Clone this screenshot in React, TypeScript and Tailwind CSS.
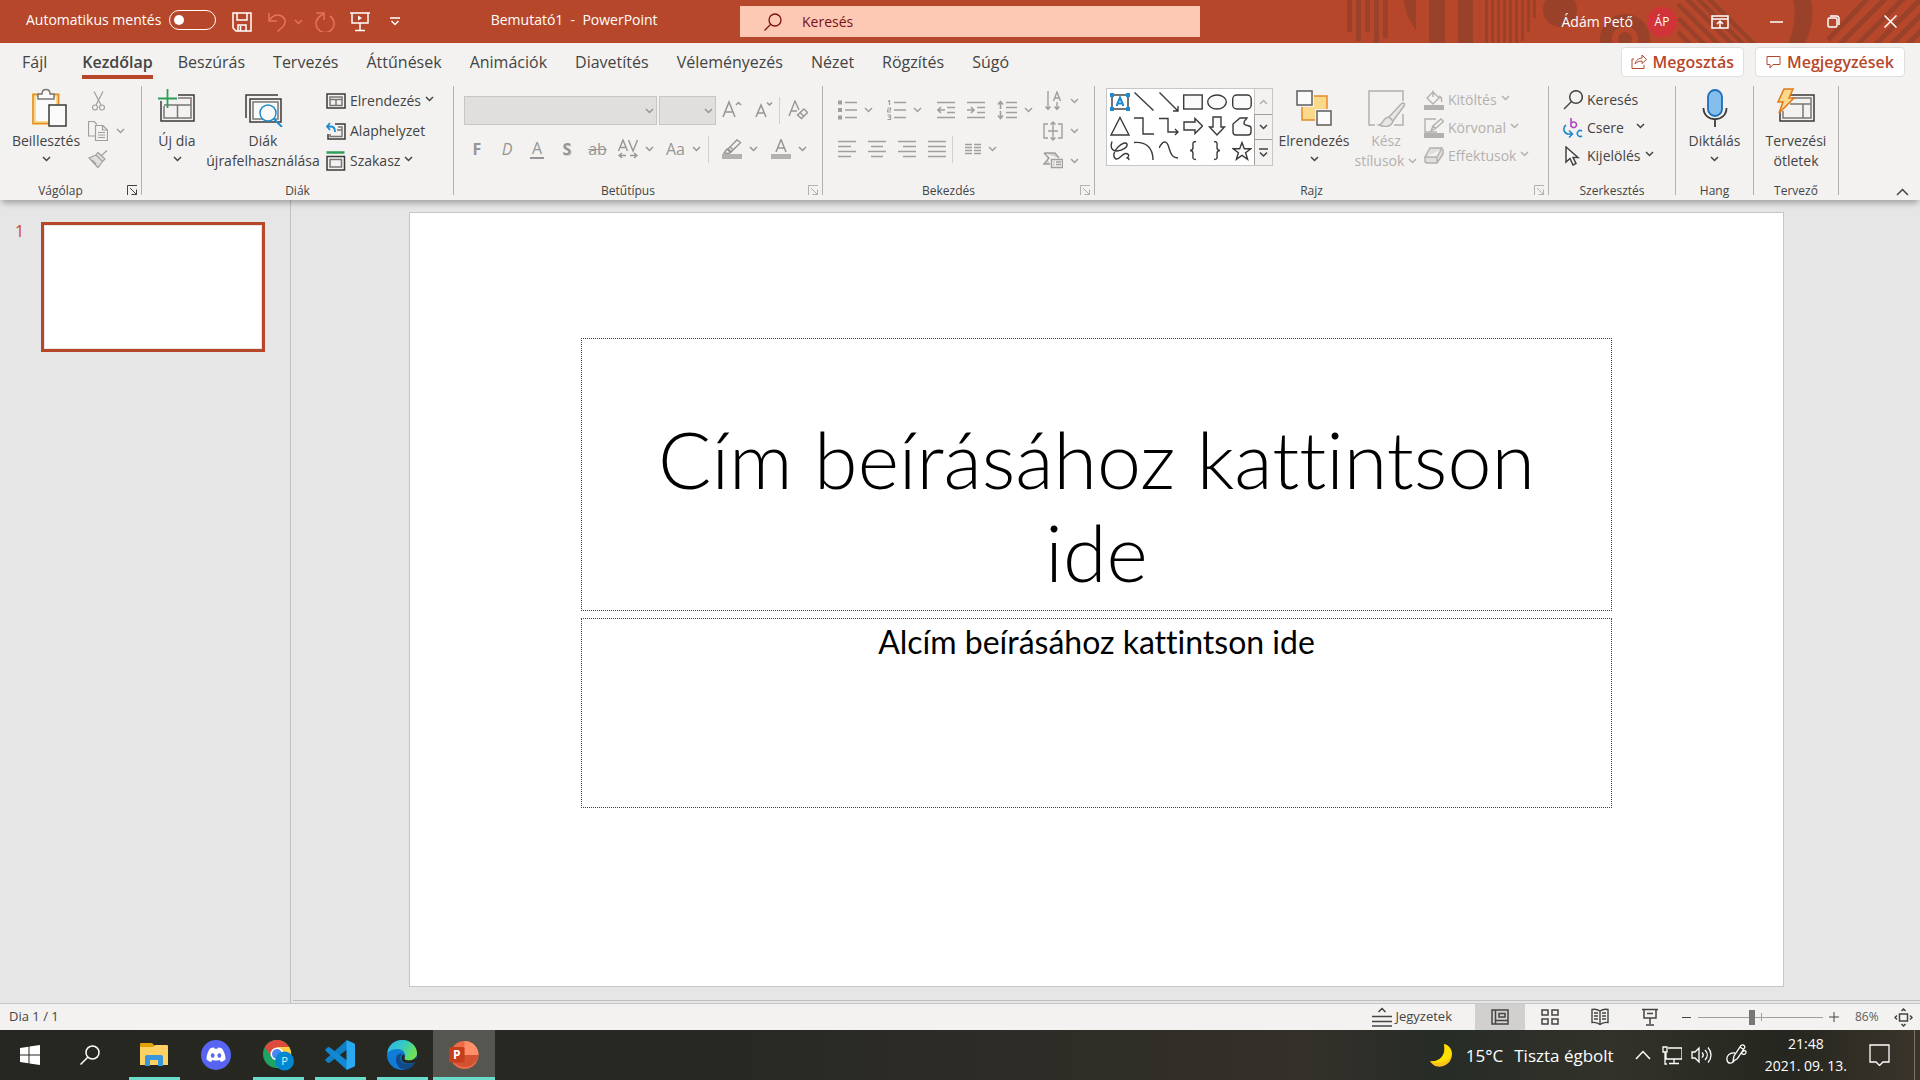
import type { ReactNode } from "react";

type IconProps = { w?: number; h?: number; sw?: number; className?: string; children: ReactNode };

function Icon({ w = 20, h = 20, sw = 1, className = "", children }: IconProps) {
  return (
    <svg
      width={w}
      height={h}
      viewBox={`0 0 ${w} ${h}`}
      fill="none"
      stroke="currentColor"
      strokeWidth={sw}
      className={`shrink-0 ${className}`}
      aria-hidden="true"
    >
      {children}
    </svg>
  );
}

function Chevron({ className = "", up = false }: { className?: string; up?: boolean }) {
  return (
    <Icon w={9} h={6} sw={1.5} className={className}>
      <path d={up ? "M1 5 4.500 1.500 8 5" : "M1 1 4.500 4.500 8 1"} />
    </Icon>
  );
}

/* ---------- title bar ---------- */

function TitleArt() {
  const thin = [43, 43, 43, 43, 43, 43, 41, 32, 18];
  return (
    <svg
      className="absolute right-0 top-0 text-[#9a412a]"
      width="580"
      height="43"
      viewBox="0 0 580 43"
      fill="currentColor"
      aria-hidden="true"
    >
      <path d="M7 0h5v32H7zM16 0h5v41h-5zM25 0h5v32h-5zM34 0h5v43h-5zM43 0h5v38h-5z" />
      <path d="M64 0h12v30C70 22 65 12 64 0zM89 0h16v43H89zM118 0h15v43h-15z" />
      {thin.map((len, i) => (
        <rect key={i} x={145 + i * 6} y="0" width="3" height={len} />
      ))}
      <circle cx="220" cy="10" r="17" />
      <circle cx="285" cy="39" r="19" fill="none" stroke="currentColor" strokeWidth="12" />
      <circle cx="285" cy="39" r="7" />
      <g stroke="currentColor" strokeWidth="4.500">
        <path d="M338 32l14 14M338 18l28 28M338 4l42 42M344-4l50 50M355-4l50 50M366-4l50 50" />
      </g>
      <path d="M453 0h18c3 15 1 29-6 43h-17c7-14 8-29 5-43z" />
      <g stroke="currentColor" strokeWidth="5">
        <path d="M488 40L530-4M500 44L548-4M518 44L566-4M536 44L582-2M552 44L582 14M568 44L582 30" />
      </g>
    </svg>
  );
}

function TitleBar() {
  return (
    <header className="relative grid h-[43px] grid-cols-[740px_460px_1fr] bg-[#b7472a] text-sm text-white">
      <TitleArt />
      <div className="flex items-center pb-1">
        <label className="ml-[26px] flex items-center gap-2">
          Automatikus mentés
          <input type="checkbox" role="switch" className="peer sr-only" />
          <span className="flex h-5 w-[47px] items-center rounded-full border border-white px-1">
            <span className="size-[10px] rounded-full bg-white" />
          </span>
        </label>
        <div className="flex items-center pt-1">
          <button className="ml-4" aria-label="Mentés">
            <Icon sw={1.5}>
              <path d="M1 1h18v18H4l-3-3zM5 1v7h10V1M6 19v-6h8v6M8.500 14v5" />
            </Icon>
          </button>
          <button className="ml-[15px] flex items-center gap-[7px] text-[#e4735a]" aria-label="Visszavonás">
            <Icon sw={1.5}>
              <path d="M2 1v8h8M2.500 8.500C5 3.500 10 1.500 14.500 4c5 3 4.500 8 1 11l-5 4.500" />
            </Icon>
            <Chevron />
          </button>
          <button className="ml-3 text-[#e4735a]" aria-label="Ismétlés">
            <Icon w={21} sw={1.500}>
              <path d="M1 1h8v7M15 4a9 9 0 1 1-9-.500L9 1.500" />
            </Icon>
          </button>
          <button className="ml-[14px]" aria-label="Vetítés az elejétől">
            <Icon sw={1.500}>
              <path d="M0 1h20M2 1v10h16V1M10 11v7M5 18.500h10" />
              <path d="M8 3.500v5l4-2.500z" fill="currentColor" stroke="none" />
            </Icon>
          </button>
          <button className="ml-5" aria-label="Gyorselérési eszköztár testreszabása">
            <Icon w={10} h={10} sw={1.500}>
              <path d="M0 1h10M1.500 4 5 7.500 8.500 4" />
            </Icon>
          </button>
        </div>
        <h1 className="flex-1 whitespace-pre pl-2 text-center">Bemutató1  -  PowerPoint</h1>
      </div>
      <label className="my-[6px] flex items-center gap-5 bg-[#fdc8b4] pl-6 text-[#7a1117]">
        <Icon w={18} h={18} sw={1.300}>
          <circle cx="11" cy="7" r="6" />
          <path d="M6.500 11.500 0.500 17.500" />
        </Icon>
        <input
          type="search"
          aria-label="Keresés"
          placeholder="Keresés"
          className="w-full bg-transparent outline-none placeholder:text-[#7a1117]"
        />
      </label>
      <div className="relative flex items-center justify-end pr-px">
        <span className="mr-[14px]">Ádám Pető</span>
        <button className="mr-[14px] flex size-[30px] items-center justify-center rounded-full bg-[#d13438] text-xs">
          ÁP
        </button>
        <button className="flex w-[57px] justify-center" aria-label="Menüszalag megjelenítési beállításai">
          <Icon w={18} h={14} sw={1.500}>
            <path d="M1 1h16v12H1zM1 4h16M9 13V6M6 9l3-3 3 3" />
          </Icon>
        </button>
        <button className="flex w-[57px] justify-center" aria-label="Kis méret">
          <Icon w={13} h={2} sw={1.500}>
            <path d="M0 1h13" />
          </Icon>
        </button>
        <button className="flex w-[57px] justify-center" aria-label="Előző méret">
          <Icon w={13} h={13} sw={1.500}>
            <rect x="1" y="3" width="9" height="9" rx="1.500" />
            <path d="M3 1h6.500a2.500 2.500 0 0 1 2.500 2.500V10" />
          </Icon>
        </button>
        <button className="flex w-[57px] justify-center" aria-label="Bezárás">
          <Icon w={13} h={13} sw={1.500}>
            <path d="M0.500 0.500l12 12M12.500 0.500l-12 12" />
          </Icon>
        </button>
      </div>
    </header>
  );
}

/* ---------- tabs ---------- */

const tabs = [
  "Beszúrás",
  "Tervezés",
  "Áttűnések",
  "Animációk",
  "Diavetítés",
  "Véleményezés",
  "Nézet",
  "Rögzítés",
  "Súgó",
];

function TabRow() {
  return (
    <nav className="flex h-[43px] items-start bg-[#f3f2f1] text-base text-[#444]">
      <button className="ml-[22px] mr-[35px] h-[38px]">Fájl</button>
      <button className="mr-[-3px] h-9 border-b-4 border-[#b7472a] pt-[6px] font-semibold">Kezdőlap</button>
      {tabs.map((t) => (
        <button key={t} className="ml-7 h-[38px]">
          {t}
        </button>
      ))}
      <div className="ml-auto mr-[15px] mt-1 flex gap-[11px] font-semibold text-[#b7472a]">
        <button className="flex h-[30px] items-center gap-[6px] rounded-sm border border-[#e1dfdd] bg-white px-[9px]">
          <Icon w={16} h={16}>
            <path d="M1 5v9.500h12V11M1 5h2M4 10c1-4 4-6 7-6V1l4.500 4.500L11 9.500V7C8 7 6 8 4 10z" />
          </Icon>
          Megosztás
        </button>
        <button className="flex h-[30px] items-center gap-[6px] rounded-sm border border-[#e1dfdd] bg-white px-[10px]">
          <Icon w={15} h={15}>
            <path d="M1 1.500h13v8H7l-3 3.500V9.500H1z" />
          </Icon>
          Megjegyzések
        </button>
      </div>
    </nav>
  );
}

/* ---------- ribbon ---------- */

function Group({
  label,
  width,
  launcher = "none",
  children,
}: {
  label: string;
  width: string;
  launcher?: "none" | "on" | "off";
  children: ReactNode;
}) {
  return (
    <section className={`relative flex h-[109px] shrink-0 flex-col border-r border-[#b3b0ad] ${width}`}>
      <div className="flex flex-1 items-start">{children}</div>
      <h2 className={`text-center text-xs leading-[9px] ${launcher === "none" ? "" : "pr-5"}`}>{label}</h2>
      {launcher !== "none" && (
        <button
          aria-label={`${label} párbeszédpanel`}
          className={`absolute bottom-0 right-1 ${launcher === "on" ? "text-[#444]" : "text-[#b3b0ad]"}`}
        >
          <Icon w={10} h={10}>
            <path d="M0.500 10V0.500H10M3 3l6.500 6.500M9.500 4.500v5h-5" />
          </Icon>
        </button>
      )}
    </section>
  );
}

function Big({
  icon,
  line1,
  line2,
  chevron = false,
  disabled = false,
  width,
}: {
  icon: ReactNode;
  line1: string;
  line2?: string;
  chevron?: boolean;
  disabled?: boolean;
  width: string;
}) {
  return (
    <button
      disabled={disabled}
      className={`flex shrink-0 flex-col items-center whitespace-nowrap pt-[2px] leading-5 ${width} ${disabled ? "text-[#b3b0ad]" : ""}`}
    >
      {icon}
      <span className="mt-1">{line1}</span>
      <span className="flex h-5 items-center gap-1">
        {line2}
        {chevron && <Chevron className={line2 ? "" : "mb-1"} />}
      </span>
    </button>
  );
}

function Row({
  icon,
  label,
  chevron = false,
  disabled = false,
  tall = false,
  gap = "gap-1",
}: {
  icon: ReactNode;
  label: string;
  chevron?: boolean;
  disabled?: boolean;
  tall?: boolean;
  gap?: string;
}) {
  return (
    <button
      disabled={disabled}
      className={`flex items-center gap-1 whitespace-nowrap ${tall ? "h-[30px]" : "h-[28px]"} ${disabled ? "text-[#b3b0ad]" : ""}`}
    >
      <span className="flex w-5 justify-center">{icon}</span>
      <span className={`flex items-center ${gap}`}>
        {label}
        {chevron && <Chevron className="mb-1" />}
      </span>
    </button>
  );
}

function Tool({ label, width, children }: { label: string; width: string; children: ReactNode }) {
  return (
    <button
      aria-label={label}
      title={label}
      disabled
      className={`flex h-[30px] shrink-0 items-center justify-center gap-[7px] ${width}`}
    >
      {children}
    </button>
  );
}

const Sep = () => <span className="h-[27px] w-px shrink-0 bg-[#d2d0ce]" />;

function ClipboardGroup() {
  return (
    <Group label="Vágólap" width="w-[142px]" launcher="on">
      <Big
        width="ml-[11px] w-[70px]"
        line1="Beillesztés"
        chevron
        icon={
          <Icon w={36} h={39} sw={1.500} className="ml-2">
            <path d="M2 7h24v28H2z" fill="#fafafa" stroke="#fbd98b" strokeWidth="4" />
            <path d="M26.500 16V6.500H1V35.500h15" stroke="#e58a2b" />
            <path d="M6 11V6h4c0-6 8-6 8 0h4v5z" fill="#fafafa" stroke="#797775" />
            <rect x="17" y="17" width="17" height="21" fill="#fafafa" stroke="#3b3a39" />
          </Icon>
        }
      />
      <div className="ml-[7px] flex flex-col text-[#a19f9d]">
        <button aria-label="Kivágás" disabled className="flex h-[30px] items-center pl-1">
          <Icon w={13} h={20} sw={1.200}>
            <path d="M2 0.500 9 14M11 0.500 4 14" />
            <circle cx="3" cy="16.500" r="2.500" />
            <circle cx="10" cy="16.500" r="2.500" />
          </Icon>
        </button>
        <button aria-label="Másolás" disabled className="flex h-[30px] items-center gap-2">
          <Icon sw={1.200}>
            <path d="M7 15H0.500V0.500H6l3 3" />
            <path d="M7.500 4.500H15l4.500 4.500v10.500h-12zM14.500 4.500V9h5M10 11.500h7M10 14h7M10 16.500h7" />
          </Icon>
          <Chevron />
        </button>
        <button aria-label="Formátummásoló" disabled className="flex h-[26px] items-center">
          <Icon sw={1.200}>
            <path d="M19 1.500 13 7M10 3.500l7 6.500-2.500 2.500L8 6zM8 6 1 9l9 9.500 4.500-6" fill="#e1dfdd" />
            <path d="M4 11l4 4" />
          </Icon>
        </button>
      </div>
    </Group>
  );
}

function SlidesGroup() {
  return (
    <Group label="Diák" width="w-[312px]">
      <Big
        width="w-[70px]"
        line1="Új dia"
        chevron
        icon={
          <Icon w={40} h={39} sw={1.500}>
            <path d="M4 13v20h33V7H21" stroke="#3b3a39" />
            <path d="M7 18v12h27V10H21M7 17h27M20.500 17v13" stroke="#797775" />
            <path d="M1 10.500h19M10.500 1v19" stroke="#2f9e58" strokeWidth="1.800" />
          </Icon>
        }
      />
      <Big
        width="ml-[-5px] w-[112px]"
        line1="Diák"
        line2="újrafelhasználása"
        icon={
          <Icon w={40} h={39} sw={1.500}>
            <path d="M3 30V7h32" stroke="#3b3a39" />
            <path d="M7 34V11h31v23z" stroke="#3b3a39" />
            <path d="M10 31V14h25v17z" fill="#fafafa" stroke="#797775" />
            <circle cx="25" cy="25" r="8" fill="#fafafa" stroke="#1e8bcd" />
            <path d="M31 31l8 8" stroke="#1e8bcd" strokeWidth="2" />
          </Icon>
        }
      />
      <div className="ml-[7px] flex flex-col">
        <Row
          tall
          label="Elrendezés"
          chevron
          icon={
            <Icon h={16} sw={1.500}>
              <path d="M1 1h18v14H1z" stroke="#3b3a39" />
              <path d="M4 4h12v8.500H4zM4 6.500h12M10 6.500v6" stroke="#797775" />
            </Icon>
          }
        />
        <Row
          tall
          label="Alaphelyzet"
          icon={
            <Icon h={18} sw={1.500}>
              <path d="M2 12v5h17V2H9" stroke="#3b3a39" />
              <path d="M4 12v2.500h12V5h-4M11 8h5" stroke="#797775" />
              <path d="M4 1 1 4.500 4 8M1 4.500h4c3 0 4 2 4 5.500" stroke="#1e8bcd" strokeWidth="1.800" />
            </Icon>
          }
        />
        <Row
          tall
          label="Szakasz"
          chevron
          icon={
            <Icon sw={1.500}>
              <path d="M0.500 1.500h18" stroke="#2f9e58" strokeWidth="2.500" />
              <path d="M1 5.500h17.500V19H1z" stroke="#3b3a39" />
              <path d="M4 8.500h11.500V16H4z" stroke="#797775" />
            </Icon>
          }
        />
      </div>
    </Group>
  );
}

function FontGroup() {
  return (
    <Group label="Betűtípus" width="w-[369px]" launcher="off">
      <div className="flex flex-col gap-[9px] pt-[9px] text-[#979593]">
        <div className="flex items-center">
          <label className="relative ml-[10px]">
            <select
              aria-label="Betűtípus"
              disabled
              className="block h-[29px] w-[193px] appearance-none border border-[#c8c6c4] bg-[#e1dfdd]"
            />
            <Chevron className="absolute right-[3px] top-3" />
          </label>
          <label className="relative ml-[2px]">
            <select
              aria-label="Betűméret"
              disabled
              className="block h-[29px] w-[57px] appearance-none border border-[#c8c6c4] bg-[#e1dfdd]"
            />
            <Chevron className="absolute right-[3px] top-3" />
          </label>
          <Tool label="Betűméret növelése" width="w-8">
            <Icon sw={1.500}>
              <path d="M1 17 7 2l6 15M3 12h8M14 5l2.500-2.500L19 5" />
            </Icon>
          </Tool>
          <Tool label="Betűméret csökkentése" width="w-[31px]">
            <Icon sw={1.500}>
              <path d="M2 17 7 5l5 12M4 13h6M13 2.500 15.500 5 18 2.500" />
            </Icon>
          </Tool>
          <Sep />
          <Tool label="Formázás törlése" width="w-9">
            <Icon sw={1.400}>
              <path d="M1 16 7 1l4 9M3 11h6M16 9l3.500 3.500-6 6L9.500 15zM12 12.500l4 4" />
            </Icon>
          </Tool>
        </div>
        <div className="flex items-center">
          <Tool label="Félkövér" width="ml-2 w-[30px]">
            <b className="text-base">F</b>
          </Tool>
          <Tool label="Dőlt" width="w-[30px]">
            <i className="text-base">D</i>
          </Tool>
          <Tool label="Aláhúzott" width="w-[30px]">
            <span className="border-b-2 border-current px-[2px] text-base leading-[18px]">A</span>
          </Tool>
          <Tool label="Árnyék" width="w-[30px]">
            <b className="text-base drop-shadow-[1px_1px_0_#d2d0ce]">S</b>
          </Tool>
          <Tool label="Áthúzott" width="w-[31px]">
            <s className="text-base">ab</s>
          </Tool>
          <Tool label="Betűköz" width="w-[46px]">
            <Icon sw={1.400}>
              <path d="M0.500 12 5 1l4.500 11M2.500 8.500h5M10.500 1 15 12l4.500-11" />
              <path d="M4 14 1 16.500 4 19M1 16.500h7M16 14l3 2.500-3 2.500M19 16.500h-7" />
            </Icon>
            <Chevron />
          </Tool>
          <Tool label="Kis- és nagybetűk" width="w-[49px]">
            <span className="text-base">Aa</span>
            <Chevron />
          </Tool>
          <Sep />
          <Tool label="Szövegkiemelés színe" width="ml-1 w-[54px]">
            <Icon sw={1.400}>
              <path d="M2 14l3-4 3.500 3.500-2 1zM6 10l9-9 3.500 2.500-9 9zM8 8l4 3" />
              <path d="M0 17.500h20" stroke="#b3b0ad" strokeWidth="5" />
            </Icon>
            <Chevron />
          </Tool>
          <Tool label="Betűszín" width="w-[44px]">
            <Icon sw={1.500}>
              <path d="M5 13 10 0.500 15 13M7 9h6" />
              <path d="M0 17.500h20" stroke="#b3b0ad" strokeWidth="5" />
            </Icon>
            <Chevron />
          </Tool>
        </div>
      </div>
    </Group>
  );
}

function AlignIcon({ d }: { d: string }) {
  return (
    <Icon w={18} h={18} sw={1.600}>
      <path d={d} />
    </Icon>
  );
}

function ParagraphGroup() {
  return (
    <Group label="Bekezdés" width="w-[272px]" launcher="off">
      <div className="flex flex-col gap-[9px] pt-[9px] text-[#a19f9d]">
        <div className="flex items-center">
          <Tool label="Felsorolás" width="ml-2 w-[49px]">
            <Icon w={19} sw={1.600}>
              <path d="M7 2.500h12M7 10h12M7 17.500h12" />
              <path d="M2 0.500v4M2 8v4M2 15.500v4" strokeWidth="4" />
            </Icon>
            <Chevron />
          </Tool>
          <Tool label="Számozás" width="w-[49px]">
            <Icon w={19} sw={1.600}>
              <path d="M7 2.500h12M7 10h12M7 17.500h12" />
              <path d="M1 1.500 2.500 0.500V5M0.500 8h3v2h-3v2h3.500M0.500 15h3v4.500h-3M1 17h2" strokeWidth="1.200" />
            </Icon>
            <Chevron />
          </Tool>
          <Tool label="Listaszint csökkentése" width="ml-[2px] w-[30px]">
            <AlignIcon d="M0 1.500h18M10 6.500h8M10 11.500h8M0 16.500h18M8 9H1.500M4 6 1 9l3 3" />
          </Tool>
          <Tool label="Listaszint növelése" width="w-[30px]">
            <AlignIcon d="M0 1.500h18M10 6.500h8M10 11.500h8M0 16.500h18M0 9h6.500M4 6l3 3-3 3" />
          </Tool>
          <Tool label="Sorköz" width="ml-1 w-10">
            <Icon sw={1.600}>
              <path d="M9 2.500h11M9 7.500h11M9 12.500h11M9 17.500h11M3.500 2v7M1 4.500l2.500-3 2.500 3M3.500 11v7M1 15.500l2.500 3 2.500-3" />
            </Icon>
            <Chevron />
          </Tool>
        </div>
        <div className="flex items-center">
          <Tool label="Balra zárt" width="ml-[9px] w-[30px]">
            <AlignIcon d="M0 1.500h18M0 6.500h13M0 11.500h18M0 16.500h13" />
          </Tool>
          <Tool label="Középre zárt" width="w-[30px]">
            <AlignIcon d="M0 1.500h18M3 6.500h12M0 11.500h18M3 16.500h12" />
          </Tool>
          <Tool label="Jobbra zárt" width="w-[30px]">
            <AlignIcon d="M0 1.500h18M5 6.500h13M0 11.500h18M5 16.500h13" />
          </Tool>
          <Tool label="Sorkizárt" width="w-[30px]">
            <AlignIcon d="M0 1.500h18M0 6.500h18M0 11.500h18M0 16.500h18" />
          </Tool>
          <Sep />
          <Tool label="Hasábok" width="ml-[2px] w-[51px]">
            <Icon w={16} h={12} sw={1.400}>
              <path d="M0 1.500h7M0 4.500h7M0 7.500h7M0 10.500h7M9 1.500h7M9 4.500h7M9 7.500h7M9 10.500h7" />
            </Icon>
            <Chevron />
          </Tool>
        </div>
      </div>
      <div className="ml-auto mr-[14px] flex flex-col text-[#a19f9d]">
        <Tool label="Szövegirány" width="w-[38px]">
          <Icon sw={1.400}>
            <path d="M5 0v18M2.500 15.500 5 18.500l2.500-3M14 11v7M11.500 15.500l2.500 3 2.500-3M10.500 10 14 1l3.500 9M12 7h4" />
          </Icon>
          <Chevron />
        </Tool>
        <Tool label="Szöveg igazítása" width="w-[38px]">
          <Icon sw={1.400}>
            <path d="M5 3H1v14h4M15 3h4v14h-4M5 10h10M10 1v18M7.500 3.500 10 1l2.500 2.500M7.500 16.500 10 19l2.500-2.500" />
          </Icon>
          <Chevron />
        </Tool>
        <Tool label="Átalakítás SmartArt-ábrává" width="w-[38px]">
          <Icon sw={1.400}>
            <path d="M1 2h11l4 5M1 2l5 5-5 6h6" fill="#d2d0ce" />
            <path d="M8.500 8.500h11v8h-11z" fill="#f3f2f1" />
            <path d="M10.500 11h1M10.500 13.500h1M13 11h5M13 13.500h5" />
          </Icon>
          <Chevron />
        </Tool>
      </div>
    </Group>
  );
}

const shapes: { name: string; draw: ReactNode }[] = [
  {
    name: "Szövegdoboz",
    draw: (
      <>
        <rect x="2" y="3" width="16" height="14" />
        <path d="M6.500 14 10 5.500 13.500 14M8 11.500h4" stroke="#1e8bcd" strokeWidth="2" />
        <path d="M0 1h4v4H0zM16 1h4v4h-4zM0 15h4v4H0zM16 15h4v4h-4z" fill="#1e8bcd" stroke="none" />
      </>
    ),
  },
  { name: "Vonal", draw: <path d="M0.500 0.500l19 18" /> },
  { name: "Nyíl", draw: <path d="M0.500 0.500l18.500 18.500M19 14v5h-5" /> },
  { name: "Téglalap", draw: <rect x="0.700" y="3" width="18.500" height="14" fill="#fafafa" /> },
  { name: "Ellipszis", draw: <ellipse cx="10" cy="10" rx="9.300" ry="7" fill="#fafafa" /> },
  { name: "Lekerekített téglalap", draw: <rect x="0.700" y="3" width="18.500" height="14" rx="4" fill="#fafafa" /> },
  { name: "Háromszög", draw: <path d="M10 1.500 19 19H1z" fill="#fafafa" /> },
  { name: "Szögletes összekötő", draw: <path d="M0 2h9v16h11" /> },
  { name: "Szögletes nyíl", draw: <path d="M0 2.500h9V16h10M16 13l3 3-3 3" /> },
  { name: "Jobbra nyíl", draw: <path d="M1 6h11V2.500l7.500 7.500L12 17.500V14H1z" fill="#fafafa" /> },
  { name: "Lefelé nyíl", draw: <path d="M6 1v10H2.500l7.500 8 7.500-8H14V1z" fill="#fafafa" /> },
  {
    name: "Szabadkézi sokszög",
    draw: <path d="M4 19h12c2 0 3-1 3-3v-4c0-4-7-1-7-5 0-3 2-3 3-5H8L1 8v8c0 2 1 3 3 3z" fill="#fafafa" />,
  },
  {
    name: "Firka",
    draw: (
      <path d="M2 0.500c-2 6 0 10 5 9.500 6-.500 11-4 10-7-1-2-5-1-9 3-4 4-6 10-2 12 4 1 6-6 10-5.500 4 .500 3 4 .500 4.500 2 0 3 .500 2 2" />
    ),
  },
  { name: "Ív", draw: <path d="M0 1.500c12-1 19 5 19 17.500" /> },
  { name: "Görbe", draw: <path d="M0 7c4-8 8-8 10 0 2 7 4 10 9 10" /> },
  { name: "Bal kapcsos zárójel", draw: <path d="M13 0.500c-4 0-3 3-3 6 0 2-1 3-3 3 2 0 3 1 3 3 0 4-1 6 3 6" /> },
  { name: "Jobb kapcsos zárójel", draw: <path d="M7 0.500c4 0 3 3 3 6 0 2 1 3 3 3-2 0-3 1-3 3 0 4 1 6-3 6" /> },
  {
    name: "Csillag",
    draw: <path d="M10 1.500l2.300 6.200h6.500l-5.200 4.100 2 6.500L10 14.400l-5.600 3.900 2-6.500L1.200 7.700h6.500z" fill="#fafafa" />,
  },
];

function DrawingGroup() {
  return (
    <Group label="Rajz" width="w-[454px]" launcher="off">
      <div className="ml-[11px] mt-[2px] flex h-[78px] w-[167px] shrink-0 border border-[#c8c6c4] bg-white">
        <div className="grid flex-1 grid-cols-6 grid-rows-3 pb-[2px] pl-px pt-px text-[#3b3a39]">
          {shapes.map((s) => (
            <button key={s.name} aria-label={s.name} title={s.name} className="flex items-center justify-center">
              <Icon sw={1.400}>{s.draw}</Icon>
            </button>
          ))}
        </div>
        <div className="grid w-[18px] grid-rows-3 bg-[#f3f2f1]">
          <button aria-label="Előző sor" disabled className="flex items-center justify-center border-l border-[#c8c6c4] text-[#b3b0ad]">
            <Chevron up />
          </button>
          <button aria-label="Következő sor" className="flex items-center justify-center border border-r-0 border-[#a19f9d]">
            <Chevron />
          </button>
          <button aria-label="Továbbiak" className="flex items-center justify-center border-l border-[#a19f9d]">
            <Icon w={9} h={9} sw={1.500}>
              <path d="M0 1h9M1 4.500 4.500 8 8 4.500" />
            </Icon>
          </button>
        </div>
      </div>
      <Big
        width="ml-[5px] w-[72px]"
        line1="Elrendezés"
        chevron
        icon={
          <Icon w={36} h={39} sw={1.500}>
            <rect x="6" y="8" width="25" height="24" fill="#fbd98b" stroke="#e58a2b" />
            <path d="M1 3h15v14H1zM21 23h14v14H21z" fill="#fafafa" stroke="#f3f2f1" strokeWidth="4" />
            <path d="M1 3h15v14H1zM21 23h14v14H21z" fill="#fafafa" stroke="#605e5c" />
          </Icon>
        }
      />
      <Big
        width="w-[72px]"
        line1="Kész"
        line2="stílusok"
        chevron
        disabled
        icon={
          <Icon w={40} h={39} sw={1.500}>
            <path d="M9 37H3V3h34v10M37 26v11h-9" fill="none" />
            <path d="M37 15c2 0 2 2 1 3L27 33l-4-4 12-13zM23 29l4 4c-2 7-9 6-14 4 5-1 3-7 10-8z" fill="#e8e6e4" />
          </Icon>
        }
      />
      <div className="ml-[2px] flex flex-col">
        <Row
          disabled
          label="Kitöltés"
          chevron
          icon={
            <Icon sw={1.400}>
              <path d="M3 8l6-6 6 6-6 6zM9 7V0.500M15 6c3 1 3 3 2.500 6" />
              <path d="M0 17.500h20" strokeWidth="5" />
            </Icon>
          }
        />
        <Row
          disabled
          label="Körvonal"
          chevron
          icon={
            <Icon sw={1.400}>
              <path d="M12 1H1v13h12M7 13l2-5 8-7 2.500 2.500-8 7zM9 8l2.500 2.500" />
              <path d="M0 17.500h20" strokeWidth="5" />
            </Icon>
          }
        />
        <Row
          disabled
          label="Effektusok"
          chevron
          icon={
            <Icon sw={1.400}>
              <path d="M6 2h12L13 11H1zM1 11v5l2 1h10l6-9V3M13 11v6" fill="#e1dfdd" />
            </Icon>
          }
        />
      </div>
    </Group>
  );
}

function EditingGroup() {
  return (
    <Group label="Szerkesztés" width="w-[127px]">
      <div className="ml-[14px] flex flex-col">
        <Row
          label="Keresés"
          icon={
            <Icon sw={1.500}>
              <circle cx="13" cy="7" r="6.300" />
              <path d="M8.500 11.500 1 19" />
            </Icon>
          }
        />
        <Row
          label="Csere"
          chevron
          gap="gap-3"
          icon={
            <Icon sw={1.600}>
              <path d="M8 0v9M8 6a2.800 2.800 0 1 1 0 1.500" stroke="#b146c2" />
              <path d="M19 13a3 3 0 1 0 0 5M3 7c-4 3-2 9 3 9h3M6 12.500l3.500 3.500L6 19.500" stroke="#1e8bcd" />
            </Icon>
          }
        />
        <Row
          label="Kijelölés"
          chevron
          icon={
            <Icon sw={1.500}>
              <path d="M3 1v15l4-3.500 3 6.500 3-1.500-3-6h5z" fill="#fafafa" />
            </Icon>
          }
        />
      </div>
    </Group>
  );
}

function Ribbon() {
  return (
    <div className="relative z-10 flex h-[114px] items-start bg-[#f3f2f1] text-sm text-[#444] shadow-[0_5px_6px_-2px_rgba(0,0,0,0.3)]">
      <ClipboardGroup />
      <SlidesGroup />
      <FontGroup />
      <ParagraphGroup />
      <DrawingGroup />
      <EditingGroup />
      <Group label="Hang" width="w-[78px]">
        <Big
          width="w-[77px]"
          line1="Diktálás"
          chevron
          icon={
            <Icon w={26} h={39} sw={1.800}>
              <rect x="6" y="2" width="14" height="26" rx="7" fill="#83beec" stroke="#1e6fb8" />
              <path d="M1.500 20c0 15 23 15 23 0M13 32v7" stroke="#3b3a39" />
            </Icon>
          }
        />
      </Group>
      <Group label="Tervező" width="w-[85px]">
        <Big
          width="w-[84px]"
          line1="Tervezési"
          line2="ötletek"
          icon={
            <Icon w={40} h={39} sw={1.500}>
              <path d="M14 7h24v26H4V24" stroke="#3b3a39" />
              <path d="M16 10h19v20H7v-7M14 16h21M27 16v14" stroke="#797775" />
              <path d="M8 1h9l-4 9h5L3 25l4-11H2z" fill="#fbd98b" stroke="#e07818" />
            </Icon>
          }
        />
      </Group>
      <button aria-label="Menüszalag összecsukása" className="ml-auto mr-[11px] self-end pb-1">
        <Icon w={13} h={8} sw={1.500}>
          <path d="M1 7 6.500 1.500 12 7" />
        </Icon>
      </button>
    </div>
  );
}

/* ---------- workspace ---------- */

function Workspace() {
  return (
    <main className="flex flex-1 bg-[#e6e6e6]">
      <aside className="flex w-[291px] shrink-0 items-start border-r border-[#c0c0c0] pl-[15px] pt-[22px]">
        <span className="w-[26px] text-base leading-[18px] text-[#d24726]">1</span>
        <button
          aria-label="1. dia"
          className="h-[130px] w-[224px] border-[3px] border-[#b7472a] bg-white shadow-[inset_0_0_0_1px_#e6e6e6]"
        />
      </aside>
      <div className="mb-[2px] ml-[2px] flex-1 border-b border-[#c0c0c0] pb-[13px] pl-[116px] pr-[136px] pt-3">
        <article className="flex h-full min-h-[774px] flex-col gap-[7px] border border-[#c6c6c6] bg-white px-[171px] pb-[178px] pt-[125px] [font-variant-ligatures:no-common-ligatures]">
          <div className="flex flex-[257] items-end justify-center border border-dotted border-[#404040] px-4 pb-3">
            <h1 className="text-center font-['Lato'] text-[79px] font-light leading-[93px] text-black">
              Cím beírásához kattintson ide
            </h1>
          </div>
          <div className="flex-[183] border border-dotted border-[#404040] pt-1">
            <p className="text-center font-['Lato'] text-[32px] leading-[38px] text-black">
              Alcím beírásához kattintson ide
            </p>
          </div>
        </article>
      </div>
    </main>
  );
}

/* ---------- status bar ---------- */

function StatusBar() {
  return (
    <footer className="flex h-[27px] items-center border-t border-[#c6c6c6] bg-[#f3f2f1] text-[13px] text-[#444]">
      <span className="ml-[9px]">Dia 1 / 1</span>
      <button className="ml-auto flex items-center gap-[3px]">
        <Icon h={20} sw={1.500}>
          <path d="M0 9.500h20M0 14.500h20M0 19h20M6.500 5 10 1.500 13.500 5" />
        </Icon>
        Jegyzetek
      </button>
      <button aria-label="Normál nézet" className="ml-[23px] flex h-full w-[50px] items-center justify-center bg-[#d2d0ce]">
        <Icon w={18} h={16} sw={1.500}>
          <path d="M1 1h16v14H1zM4.500 1v14M4.500 11.500H17M8 4.500h6v3.500H8z" />
        </Icon>
      </button>
      <button aria-label="Diarendező" className="flex w-[50px] justify-center">
        <Icon w={18} h={16} sw={1.500}>
          <path d="M1 1h6v5H1zM11 1h6v5h-6zM1 10h6v5H1zM11 10h6v5h-6z" />
        </Icon>
      </button>
      <button aria-label="Olvasó nézet" className="flex w-[50px] justify-center">
        <Icon w={18} h={18} sw={1.400}>
          <path d="M9 3C6 1 4 1 1 1.500v13c3-.500 5 0 8 2 3-2 5-2.500 8-2v-13C14 1 12 1 9 3zM9 3v14M3 5h4M3 8h4M3 11h4M11 5h4M11 8h4M11 11h4" />
        </Icon>
      </button>
      <button aria-label="Diavetítés" className="flex w-[49px] justify-center">
        <Icon w={16} h={18} sw={1.500}>
          <path d="M0 1.500h16M2 1.500v8.500h12V1.500M5 5.500h6M8 10v6M4 17h8" />
        </Icon>
      </button>
      <button aria-label="Kicsinyítés" className="ml-2">
        <Icon w={9} h={9}>
          <path d="M0 4.500h9" />
        </Icon>
      </button>
      <div className="relative ml-[7px] flex items-center">
        <input
          type="range"
          aria-label="Nagyítás"
          min={0}
          max={100}
          defaultValue={43}
          className="h-4 w-[125px] appearance-none bg-[linear-gradient(#a19f9d,#a19f9d)] bg-[length:100%_1px] bg-center bg-no-repeat [&::-webkit-slider-thumb]:h-[15px] [&::-webkit-slider-thumb]:w-[6px] [&::-webkit-slider-thumb]:appearance-none [&::-webkit-slider-thumb]:bg-[#767676]"
        />
        <span className="absolute left-1/2 h-2 w-px bg-[#a19f9d]" />
      </div>
      <button aria-label="Nagyítás" className="ml-[6px]">
        <Icon w={10} h={10}>
          <path d="M0 5h10M5 0v10" />
        </Icon>
      </button>
      <button className="ml-4 w-7 text-left text-xs text-[#605e5c]">86%</button>
      <button aria-label="Ablak méretéhez igazítás" className="ml-[11px] mr-[7px]">
        <Icon w={19} h={19} sw={1.500}>
          <path d="M5.500 6h8v7h-8zM7.500 3l2-2 2 2M7.500 16l2 2 2-2M3 7.500l-2 2 2 2M16 7.500l2 2-2 2" />
        </Icon>
      </button>
    </footer>
  );
}

/* ---------- taskbar ---------- */

function Task({ label, open = false, active = false, children }: { label: string; open?: boolean; active?: boolean; children: ReactNode }) {
  return (
    <button
      aria-label={label}
      className={`flex h-full w-[62px] flex-col items-center ${active ? "bg-[#55564f]" : ""}`}
    >
      <span className="flex flex-1 items-center pt-[3px]">{children}</span>
      <span className={`h-[3px] ${active ? "w-full" : "w-[51px]"} ${open ? "bg-[#6bdccb]" : ""}`} />
    </button>
  );
}

function Taskbar() {
  return (
    <div className="flex h-[50px] items-stretch bg-[linear-gradient(90deg,#262720_0%,#292923_40%,#34302a_68%,#272c26_75%,#32322a_84%,#25261f_93%,#3b352b_100%)] text-white">
      <button aria-label="Start" className="flex w-[60px] items-center justify-center">
        <Icon>
          <path d="M0 3l8.500-1.300v7.800H0zM9.500 1.500 20 0v9.500H9.500zM0 10.500h8.500v7.800L0 17zM9.500 10.500H20V20L9.500 18.500z" fill="currentColor" stroke="none" />
        </Icon>
      </button>
      <button aria-label="Keresés" className="mr-[3px] flex w-[60px] items-center justify-center">
        <Icon sw={1.500}>
          <circle cx="12.500" cy="7.500" r="6.500" />
          <path d="M8 12 0.500 19.500" />
        </Icon>
      </button>
      <Task label="Fájlkezelő" open>
        <Icon w={28} h={24}>
          <path d="M0 1q0-1 1-1h11l2 2v4H0z" fill="#e3a008" stroke="none" />
          <path d="M0 4h13l2-2h12q1 0 1 1v19H0z" fill="#fdd162" stroke="none" />
          <path d="M5 23V14q0-2 2-2h14q2 0 2 2v9h-5v-6h-8v6z" fill="#3c96dc" stroke="none" />
        </Icon>
      </Task>
      <Task label="Discord">
        <Icon w={30} h={30}>
          <circle cx="15" cy="15" r="15" fill="#5865f2" stroke="none" />
          <path
            d="M9 8.500q2-1 4-1l.700 1.200h2.600L17 7.500q2 0 4 1 3.500 5 3.500 11-2 1.800-4.500 2.500l-1.300-2q-3.700 1-7.400 0L10 22q-2.500-.700-4.500-2.500 0-6 3.500-11z"
            fill="#fff"
            stroke="none"
          />
          <ellipse cx="11.700" cy="15.500" rx="1.900" ry="2.200" fill="#5865f2" stroke="none" />
          <ellipse cx="18.300" cy="15.500" rx="1.900" ry="2.200" fill="#5865f2" stroke="none" />
        </Icon>
      </Task>
      <Task label="Google Chrome" open>
        <svg width="32" height="32" viewBox="0 0 32 32" aria-hidden="true">
          <circle cx="15" cy="15" r="14" fill="#1da462" />
          <path d="M15 15 2.900 8A14 14 0 0 1 27.100 8z" fill="#dd4b3e" />
          <path d="M15 8h12.200A14 14 0 0 1 15 29l6-10z" fill="#ffcd41" />
          <path d="M2.900 8A14 14 0 0 1 27.100 8H15a7 7 0 0 0-6 10z" fill="#dd4b3e" />
          <circle cx="15" cy="15" r="6.500" fill="#fff" />
          <circle cx="15" cy="15" r="5" fill="#4a86f0" />
          <circle cx="22.500" cy="22" r="9.500" fill="#0288d1" />
          <text x="22.500" y="26" textAnchor="middle" fontSize="11" fontFamily="Open Sans, sans-serif" fill="#d8efff">
            P
          </text>
        </svg>
      </Task>
      <Task label="Visual Studio Code" open>
        <svg width="30" height="30" viewBox="0 0 30 30" aria-hidden="true">
          <path d="M22 0 0.800 19q-1 1 0 2l2 1.700q.800.600 1.700 0L22 9.500z" fill="#0e7fc4" />
          <path d="M22 30 0.800 11q-1-1 0-2l2-1.700q.800-.600 1.700 0L22 20.500z" fill="#1089d2" />
          <path d="M21.500 30V0L29 3.300q1 .500 1 1.500v20.400q0 1-1 1.500z" fill="#2aa9f3" />
        </svg>
      </Task>
      <Task label="Microsoft Edge" open>
        <svg width="30" height="30" viewBox="0 0 30 30" aria-hidden="true">
          <defs>
            <linearGradient id="edgeTop" x1="0" y1="0" x2="1" y2="0.500">
              <stop offset="0" stopColor="#2fb4e9" />
              <stop offset="0.500" stopColor="#33c9c8" />
              <stop offset="1" stopColor="#6fe052" />
            </linearGradient>
          </defs>
          <circle cx="15" cy="15" r="15" fill="#0f7cd6" />
          <path d="M0.300 13C1.500 5 7.500 0 15 0c9 0 15 6.500 15 13 0 5-4 7.500-8 7.500-3.500 0-5-1.200-4.500-2.500 2-3 0-9-7-9-4 0-8 1.500-10.200 4z" fill="url(#edgeTop)" />
          <path d="M10.500 15c-3 3-2 13 6.500 14.800 5-.500 9-3.500 11.300-7.500-8 4-14.800.500-15-4.300-.100-2 1-3.500 2-4.500-2-.200-3.800.500-4.800 1.500z" fill="#114a8b" />
          <path d="M17.500 18c-.500 1.300 1 2.500 4.500 2.500 3 0 6-1.500 7.300-4l.700 4.500-1.700 1.300c-5 2-10 1.500-12.500-.800-1.500-1.500-2-5 0-7 2 0 2.500 2 1.700 3.500z" fill="#262720" />
        </svg>
      </Task>
      <Task label="PowerPoint" open active>
        <svg width="30" height="28" viewBox="0 0 30 28" aria-hidden="true">
          <circle cx="15.500" cy="14" r="14" fill="#ed6c47" />
          <path d="M15.500 0a14 14 0 0 1 14 14h-14z" fill="#ff8f6b" />
          <path d="M1.800 14h27.700a14 14 0 0 1-27.700 0z" fill="#d35230" />
          <rect x="0" y="6" width="15.500" height="15.500" rx="1.500" fill="#c43e1c" />
          <text x="7.800" y="18" textAnchor="middle" fontSize="12" fontWeight="700" fontFamily="Open Sans, sans-serif" fill="#fff">
            P
          </text>
        </svg>
      </Task>
      <div className="ml-auto flex items-center text-[17px]">
        <button className="flex items-center pt-[2px]">
          <svg width="24" height="26" viewBox="0 0 24 26" className="mr-[13px]" aria-hidden="true">
            <path d="M15 1c8 2 10 11 6 17S6 27 1 18c8 2 17-5 14-17z" fill="#fcc419" />
            <path d="M15 1c8 2 9 10 6 14S8 22 1 18c8 2 17-5 14-17z" fill="#ffe100" />
          </svg>
          <span>15°C</span>
          <span className="ml-[11px]">Tiszta égbolt</span>
        </button>
        <button aria-label="Rejtett ikonok" className="ml-[21px]">
          <Icon w={16} h={10} sw={1.500}>
            <path d="M1 9 8 1.500 15 9" />
          </Icon>
        </button>
        <button aria-label="Hálózat" className="ml-[11px]">
          <Icon sw={1.300}>
            <path d="M6 3h14v11H4V8M12 14v4M7 18.500h10M1 2h4v5H1zM3 7v12h2" />
          </Icon>
        </button>
        <button aria-label="Hangerő" className="ml-[9px]">
          <Icon w={22} sw={1.300}>
            <path d="M1 7h3l4-4v14l-4-4H1zM11 7.500c1.500 1.500 1.500 3.500 0 5M14 5c3 3 3 7 0 10M17 2.500c4 4.500 4 10.500 0 15" />
          </Icon>
        </button>
        <button aria-label="Windows Ink" className="ml-[13px]">
          <Icon w={21} h={22} sw={1.300}>
            <path d="M7 17 8 12 15 1.500q2-1.500 3.500.500.500 1 0 2L11 15zM14 3l3.500 2.500M9 9c-5-1-9 3-8 7 1 5 6 3 7 1M12 14c3-7 8-9 8-6s-3 3-5 1" />
          </Icon>
        </button>
        <button className="ml-[18px] text-center text-sm leading-[22px]">
          <time className="block">21:48</time>
          <time className="block">2021. 09. 13.</time>
        </button>
        <button aria-label="Értesítések" className="ml-[22px]">
          <Icon w={21} h={22} sw={1.300}>
            <path d="M1 1h19v17h-6l-3.500 3.500L7 18H1z" />
          </Icon>
        </button>
        <span className="ml-[24px] mr-[5px] h-[50px] w-px bg-[#77736b]" />
      </div>
    </div>
  );
}

export default function App() {
  return (
    <div className="flex min-h-screen flex-col font-['Open_Sans',sans-serif]">
      <TitleBar />
      <TabRow />
      <Ribbon />
      <Workspace />
      <StatusBar />
      <Taskbar />
    </div>
  );
}
